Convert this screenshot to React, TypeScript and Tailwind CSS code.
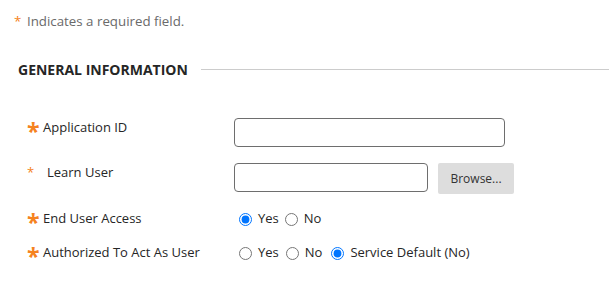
import React from "react";

const font = { fontFamily: '"Open Sans", "Liberation Sans", sans-serif' };

function BigStar() {
  return (
    <span className="inline-block w-[16px] h-[18px] shrink-0 text-[23px] font-bold leading-[18px] text-[#f58220] relative top-[4px]">
      *
    </span>
  );
}

function SmallStar() {
  return (
    <span className="inline-block w-[20px] shrink-0 text-[13px] leading-[18px] text-[#f58220]">*</span>
  );
}

function Radio({ checked, name, label }: { checked?: boolean; name: string; label: string }) {
  return (
    <label className="flex items-start">
      <input
        type="radio"
        name={name}
        defaultChecked={checked}
        className="mt-[4px] h-[13px] w-[13px] shrink-0"
      />
      <span className="ml-[6px] leading-[18px]">{label}</span>
    </label>
  );
}

export default function App() {
  return (
    <div className="w-[609px] h-[288px] bg-white text-[13px] text-[#262626] overflow-hidden" style={font}>
      <div className="pt-3 pl-[14px] leading-[18px] text-[13.3px] text-[#6a6a6a]">
        <span className="inline-block w-[13px] text-[#f58220]">*</span>
        Indicates a required field.
      </div>
      <div className="mt-[30px] flex items-center pl-[18px]">
        <h2 className="text-[14px] font-bold leading-[20px] text-[#262626]">GENERAL INFORMATION</h2>
        <div className="ml-[13px] flex-1 h-px bg-[#cccccc] relative -top-[1px]" />
      </div>

      <div className="mt-[38px] grid grid-cols-[234px_1fr] gap-y-[16px]">
        <div className="flex items-start pl-[27px] leading-[18px]">
          <BigStar />
          <span>Application ID</span>
        </div>
        <div>
          <input type="text" className="block w-[271px] h-[29px] border border-[#6e6e6e] rounded-[4px] bg-white" />
        </div>

        <div className="flex items-start pl-[27px] leading-[18px]">
          <SmallStar />
          <span>Learn User</span>
        </div>
        <div className="flex items-start">
          <input type="text" className="block w-[194px] h-[29px] border border-[#6e6e6e] rounded-[4px] bg-white" />
          <button className="ml-[10px] w-[76px] h-[31px] bg-[#dddddd] rounded-[2px] text-[#333333] text-[12px]">
            Browse...
          </button>
        </div>

        <div className="flex items-start pl-[27px] leading-[18px] -mt-[1px]">
          <BigStar />
          <span>End User Access</span>
        </div>
        <div className="flex items-start -mt-[1px] pl-[5px] gap-[6px]">
          <Radio name="eua" label="Yes" checked />
          <Radio name="eua" label="No" />
        </div>

        <div className="flex items-start pl-[27px] leading-[18px]">
          <BigStar />
          <span>Authorized To Act As User</span>
        </div>
        <div className="flex items-start pl-[5px] gap-[7px]">
          <Radio name="auth" label="Yes" />
          <Radio name="auth" label="No" />
          <span className="ml-[2px]">
            <Radio name="auth" label="Service Default (No)" checked />
          </span>
        </div>
      </div>
    </div>
  );
}
